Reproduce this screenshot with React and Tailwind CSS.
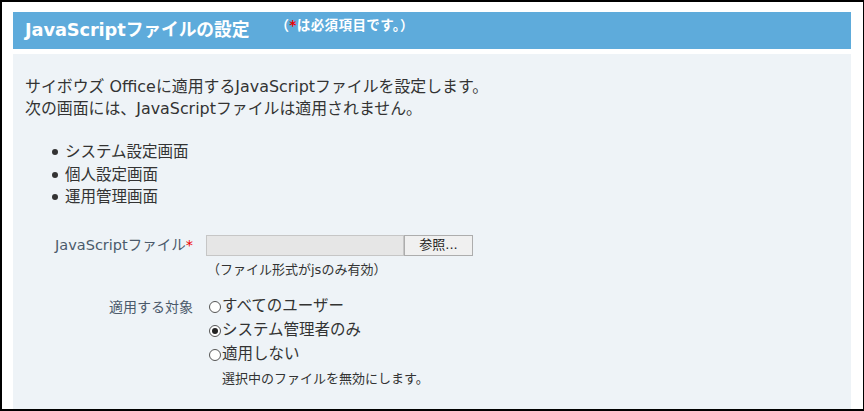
import React from "react";

const F = { fontFamily: '"DejaVu Sans", "Noto Sans CJK JP", sans-serif' };

function Radio({ checked, children }) {
  return (
    <div className="flex items-center h-[24px]">
      <span className="relative inline-block w-[12px] h-[12px] rounded-full border border-[#555] bg-white mr-[1px]">
        {checked && (
          <span className="absolute left-[2px] top-[2px] w-[6px] h-[6px] rounded-full bg-[#222]" />
        )}
      </span>
      <span>{children}</span>
    </div>
  );
}

export default function App() {
  return (
    <div
      style={F}
      className="w-[864px] h-[411px] bg-white border-t-2 border-l-2 border-b-2 border-r border-black pl-[11px] pr-[12px] pt-[10px] flex flex-col text-[#333]"
    >
      <div className="h-[37px] bg-[#5eabdb] flex items-center pl-[12px] shrink-0">
        <span className="text-white font-bold text-[17.8px] tracking-[-0.1px]">JavaScriptファイルの設定</span>
        <span className="text-white font-bold text-[13.5px] ml-[26px] -mt-[10px] tracking-[0.4px]">
          （<span className="text-[#e00]">*</span>は必須項目です。）
        </span>
      </div>
      <div className="mt-[5px] flex-1 bg-[#eef3f7] pl-[12px] pt-[22px] text-[15.5px] text-[#333]">
        <div className="leading-[22px] text-[15.9px]">
          <div>サイボウズ Officeに適用するJavaScriptファイルを設定します。</div>
          <div>次の画面には、JavaScriptファイルは適用されません。</div>
        </div>
        <ul className="mt-[21px] pl-[40px] leading-[22.5px]">
          {["システム設定画面", "個人設定画面", "運用管理画面"].map((t) => (
            <li key={t} className="flex items-center">
              <span className="w-[6px] h-[6px] rounded-full bg-[#333] mr-[7px] -ml-[13px]" />
              {t}
            </li>
          ))}
        </ul>
        <div className="mt-[26px] flex">
          <div className="w-[168px] text-right text-[#4b5a6b] text-[14.5px] pt-[0px] leading-[20px]">
            JavaScriptファイル<span className="text-[#e00]">*</span>
          </div>
          <div className="ml-[13px]">
            <div className="flex h-[21px]">
              <div className="w-[198px] bg-[#e6e6e6] border border-[#c6c6c6]" />
              <div className="w-[69px] bg-[#f0f0f0] border border-[#adadad] text-[13px] flex items-center justify-center text-[#222]">
                参照...
              </div>
            </div>
            <div className="text-[13px] mt-[5px] leading-[18px] ml-[1px]">（ファイル形式がjsのみ有効）</div>
          </div>
        </div>
        <div className="mt-[16px] flex">
          <div className="w-[168px] text-right text-[#4b5a6b] text-[14px] leading-[24px]">
            適用する対象
          </div>
          <div className="ml-[16px] text-[15.5px]">
            <Radio>すべてのユーザー</Radio>
            <Radio checked>システム管理者のみ</Radio>
            <Radio>適用しない</Radio>
            <div className="text-[13px] ml-[13px] mt-[2px]">選択中のファイルを無効にします。</div>
          </div>
        </div>
      </div>
    </div>
  );
}
